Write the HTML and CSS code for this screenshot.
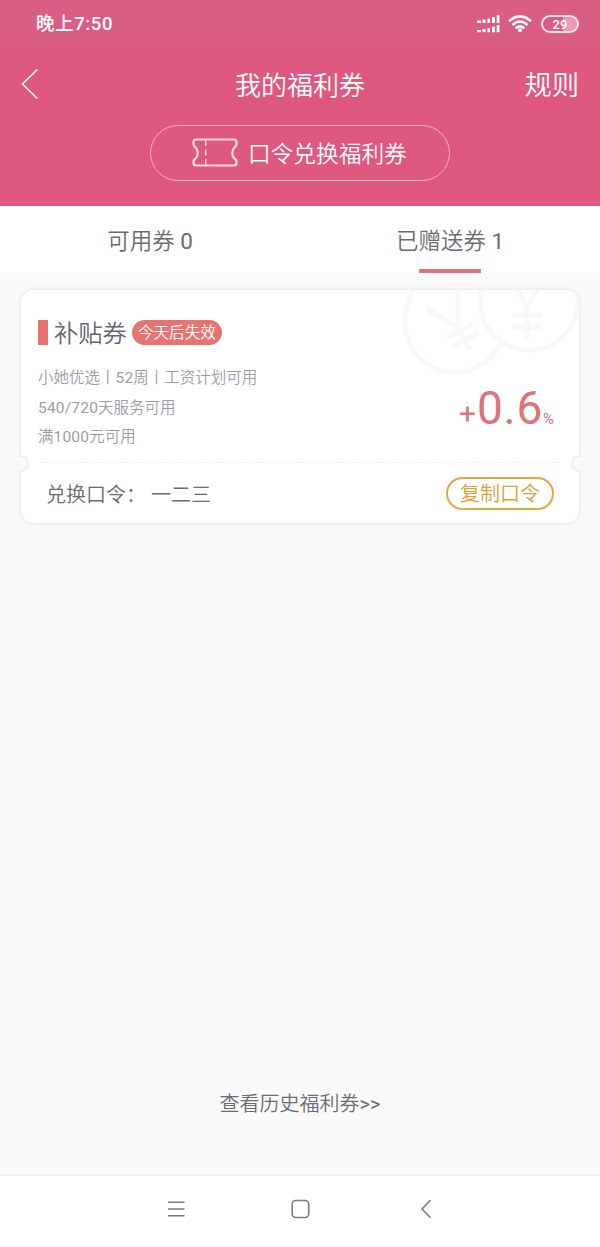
FILE: index.html
```html
<!DOCTYPE html>
<html lang="zh-CN">
<head>
<meta charset="utf-8">
<title>我的福利券</title>
<link rel="stylesheet" href="styles.css">
</head>
<body>
<div class="screen">
  <div class="status">
    <span class="time">晚上7:50</span>
    <div class="status-icons">
      <svg class="signal" width="23" height="18" viewBox="0 0 23 18" fill="#fff">
        <path d="M0 5.500h4v2.500H0zM5.500 4.500h3v3.500h-3zM10.500 3.500h2.500v4.500h-2.500zM15 2h3v6h-3zM19.700.3h2.800V8h-2.800zM0 15h4v2.300H0zM5.500 14h3v3.300h-3zM10.500 13h2.500v4.300h-2.500zM15 11.700h3v5.600h-3zM19.700 10h2.800v7.300h-2.800z"/>
      </svg>
      <svg class="wifi" width="24" height="18" viewBox="0 0 24 18" fill="none" stroke="#fff" stroke-width="2.500">
        <path d="M1 6.300Q12-3.500 23 6.300M4.500 10Q12 3 19.500 10M7.700 13.300Q12 9.300 16.300 13.300"/>
        <circle cx="12" cy="15.200" r="2" fill="#fff" stroke="none"/>
      </svg>
      <span class="battery">29</span>
    </div>
  </div>
  <header class="header">
    <div class="navbar">
      <svg class="back" width="18" height="32" viewBox="0 0 18 32" fill="none" stroke="#fff" stroke-width="1.500"><path d="M16.300 1.500 1.500 16l14.800 14.500"/></svg>
      <h1>我的福利券</h1>
      <span class="rules">规则</span>
    </div>
    <div class="redeem">
      <svg width="46" height="30" viewBox="0 0 46 30" fill="none" stroke="#fbdde6" stroke-width="2.200">
        <path d="M4 1.500H42Q44.500 1.500 44.500 4V6Q44.500 8 42.500 9.500C39.500 12 39.500 18 42.500 20.500Q44.500 22 44.500 24V25Q44.500 27.500 42 27.500H4Q1.500 27.500 1.500 25V24Q1.500 22 3.500 20.500C6.500 18 6.500 12 3.500 9.500Q1.500 8 1.500 6V4Q1.500 1.500 4 1.500Z"/>
        <path d="M13.700 2v6M13.700 11.500v6M13.700 21v6" stroke-width="1.500"/>
      </svg>
      <span>口令兑换福利券</span>
    </div>
  </header>
  <nav class="tabs">
    <div class="tab">可用券 <span class="count">0</span></div>
    <div class="tab active">已赠送券 <span class="count">1</span></div>
  </nav>
  <main class="content">
    <section class="coupon">
      <svg class="coins" width="180" height="86" viewBox="0 0 180 86" fill="none" stroke="#f8f8f8" stroke-width="5">
        <path d="M102 52A47 47 0 1 1 10 12Q12 2 15-3"/>
        <circle cx="130" cy="11" r="49"/>
        <path d="M118-2 128 17 139-2M128 17V49M113 25H143M113 37H143"/>
        <path d="M28 19 59 38V0M59 38 71 60M48 47 74 34M54 57 79 43"/>
      </svg>
      <div class="details">
        <div class="info">
          <div class="heading"><i class="mark"></i><h2>补贴券</h2><span class="badge">今天后失效</span></div>
          <p class="plans">小她优选丨<span class="digits">52</span>周丨工资计划可用</p>
          <p class="service"><span class="digits">540/720</span>天服务可用</p>
          <p>满<span class="digits">1000</span>元可用</p>
        </div>
        <div class="rate"><span class="plus">+</span><span class="value">0.6</span><span class="percent">%</span></div>
      </div>
      <div class="divider"></div>
      <div class="code">
        <span>兑换口令：</span><span class="word">一二三</span>
        <span class="copy">复制口令</span>
      </div>
    </section>
    <div class="history">查看历史福利券<span class="count">&gt;&gt;</span></div>
  </main>
  <footer class="system">
    <svg width="18" height="18" viewBox="0 0 18 18" fill="none" stroke="#7b7b7b" stroke-width="1.600"><path d="M1 2.200h16.500M1 9h16.500M1 15.700h16.500"/></svg>
    <svg width="20" height="20" viewBox="0 0 20 20" fill="none" stroke="#7b7b7b" stroke-width="1.600"><rect x="1.200" y="1.500" width="16.500" height="17" rx="3.500"/></svg>
    <svg width="18" height="20" viewBox="0 0 18 20" fill="none" stroke="#7b7b7b" stroke-width="1.600"><path d="M14.500 1.300 6 10l8.500 8.700"/></svg>
  </footer>
</div>
</body>
</html>
```
FILE: styles.css
```css
*, *::before, *::after { box-sizing: border-box; }
body { margin: 0; font-family: Roboto, "Noto Sans CJK SC", sans-serif; font-weight: 350; color: #6b6b74; background: #fafafa; }
h1, h2, p { margin: 0; font-weight: inherit; }
svg { display: block; flex: none; }
.screen { width: 600px; height: 1247px; display: flex; flex-direction: column; overflow: hidden; }
.status { height: 47px; flex: none; background: #da5d83; color: #fff; display: flex; justify-content: space-between; padding: 0 21px 0 36px; }
.time { font-size: 18.500px; font-weight: 500; line-height: 48px; letter-spacing: .6px; }
.status-icons { display: flex; align-items: center; }
.wifi { margin: 0 9px 0 8px; }
.battery { width: 38px; height: 18px; border: 2px solid #fce3eb; border-radius: 9px; background: linear-gradient(90deg, transparent 60%, #e99ab4 60%); font-size: 13px; font-weight: 500; line-height: 15px; text-align: center; }
.header { height: 159px; flex: none; background: #df5880; color: #fff; display: flex; flex-direction: column; align-items: center; }
.navbar { width: 100%; height: 78px; display: grid; grid-template-columns: 1fr auto 1fr; align-items: center; padding: 0 21px; flex: none; }
.back { margin-top: -5px; }
h1 { font-size: 26px; line-height: 38px; margin-top: -1px; }
.rules { justify-self: end; font-size: 27.300px; line-height: 38px; margin-top: -1px; }
.redeem { width: 300px; height: 56px; border: 1px solid #f2b2c6; border-radius: 28px; display: flex; align-items: center; padding-left: 41px; font-size: 22.700px; line-height: 34px; white-space: nowrap; }
.redeem svg { margin-right: 10px; }
.redeem span { padding-top: 3px; }
.tabs { height: 67px; flex: none; background: #fff; display: grid; grid-template-columns: 1fr 1fr; font-size: 22.500px; line-height: 70px; text-align: center; }
.tab { position: relative; height: 67px; }
.count { font-weight: 400; }
.tab.active::after { content: ""; position: absolute; left: 119px; bottom: 0; width: 62px; height: 4px; background: #dd7479; }
.content { flex: 1; display: flex; flex-direction: column; padding: 17px 21px 0; }
.coupon { position: relative; height: 233px; border-radius: 13px; background: #fff; box-shadow: 0 0 5px rgba(0,0,0,.12); }
.coupon::before, .coupon::after { content: ""; position: absolute; top: 165px; width: 17px; height: 17px; background: #fafafa; border: 2px solid #efefef; border-radius: 50%; }
.coupon::before { left: -9px; clip-path: inset(0 0 0 7px); }
.coupon::after { right: -9px; clip-path: inset(0 7px 0 0); }
.coins { position: absolute; right: 0; top: 0; border-top-right-radius: 13px; overflow: hidden; }
.details { position: relative; height: 172px; display: flex; justify-content: space-between; padding: 0 25px 0 17px; }
.info { padding-top: 24px; font-size: 15.500px; line-height: 29px; color: #9c9ca7; }
.digits { font-weight: 400; letter-spacing: .2px; }
.heading { display: flex; align-items: center; height: 36px; color: #666673; }
.mark { width: 10px; height: 25px; background: #e77373; margin-right: 6px; }
h2 { font-size: 24.300px; line-height: 36px; padding-top: 3px; }
.badge { width: 90px; height: 25px; margin-left: 5px; border-radius: 13px; background: #e77373; color: #fff; font-size: 15.600px; line-height: 27px; text-align: center; }
.plans { margin-top: 14px; }
.service { margin-top: 1px; }
.rate { display: flex; align-items: baseline; margin-top: 91px; color: #dd7479; line-height: 54px; font-weight: 400; }
.plus { font-size: 30px; }
.value { font-size: 46px; letter-spacing: .7px; margin-left: 1px; }
.percent { font-size: 15px; font-weight: 400; }
.divider { height: 0; margin: 0 19px; border-top: 1px dashed #f0f0f0; }
.code { display: flex; align-items: center; height: 60px; padding: 0 25px; font-size: 20px; line-height: 32px; }
.code > span:not(.copy) { padding-top: 3px; }
.word { margin-left: 5px; }
.copy { width: 108px; height: 33px; margin-left: auto; border: 2px solid #dfaa40; border-radius: 17px; color: #dca032; line-height: 31px; text-align: center; }
.history { margin-top: 565px; text-align: center; font-size: 20px; line-height: 32px; }
.system { height: 73px; flex: none; border-top: 2px solid #f1f1f1; background: #fff; display: flex; justify-content: space-between; align-items: center; padding: 0 166px 6px 167px; }
```
